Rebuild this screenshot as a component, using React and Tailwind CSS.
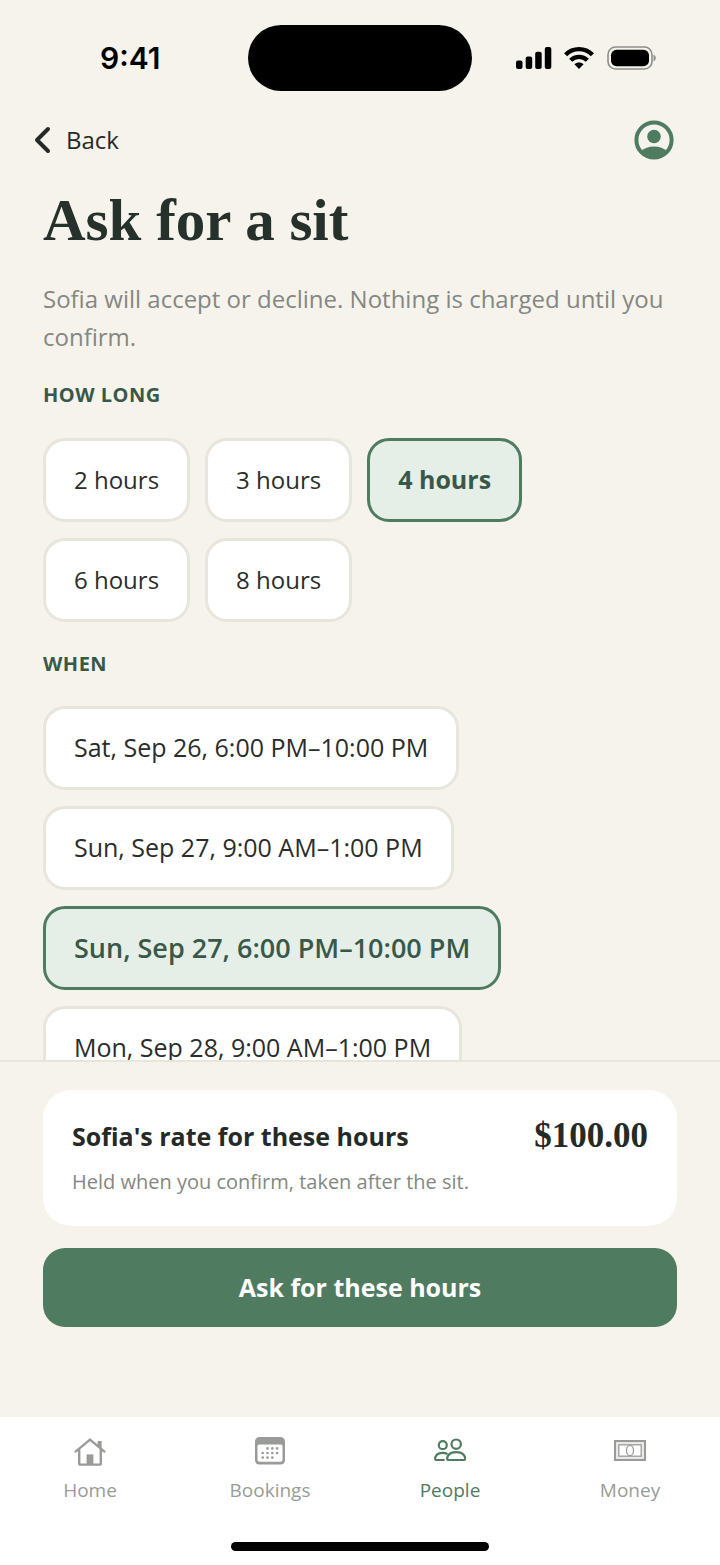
import React, { useState } from 'react';

const durations = ['2 hours', '3 hours', '4 hours', '6 hours', '8 hours'];

const slots = [
  'Sat, Sep 26, 6:00 PM–10:00 PM',
  'Sun, Sep 27, 9:00 AM–1:00 PM',
  'Sun, Sep 27, 6:00 PM–10:00 PM',
  'Mon, Sep 28, 9:00 AM–1:00 PM',
];

function HomeIcon() {
  return (
    <svg viewBox="0 0 32 32" className="w-8 h-8" fill="none" stroke="currentColor" strokeWidth="2.4" strokeLinecap="round" strokeLinejoin="round">
      <path d="M1.6 15.6 16 3.6l14.4 12" />
      <path d="M5.2 13.4v13.8a1.4 1.4 0 0 0 1.4 1.4h18.8a1.4 1.4 0 0 0 1.4-1.4V13.4" />
      <path d="M23.6 5h4v9l-4-3.4z" fill="currentColor" stroke="none" />
      <path d="M12.6 18.4h6.8v10h-6.8z" fill="currentColor" stroke="none" />
    </svg>
  );
}

function BookingsIcon() {
  return (
    <svg viewBox="0 0 32 32" className="w-8 h-8" fill="currentColor">
      <path fillRule="evenodd" d="M5.5 1h21A4.5 4.5 0 0 1 31 5.500v18.8a4.5 4.5 0 0 1-4.5 4.2h-21A4.5 4.5 0 0 1 1 24.3V5.500A4.5 4.5 0 0 1 5.5 1Zm-.7 7.6a1.6 1.6 0 0 0-1.3 1.6v13.6a2 2 0 0 0 2 2h21a2 2 0 0 0 2-2V10.2a1.6 1.6 0 0 0-1.3-1.6Z" />
      {[[13.5, 12.4], [18.3, 12.4], [23.1, 12.4], [8.7, 17], [13.5, 17], [18.3, 17], [23.1, 17], [8.7, 21.6], [13.5, 21.6], [18.3, 21.6]].map(([x, y]) => (
        <circle key={`${x}-${y}`} cx={x} cy={y} r="1.3" />
      ))}
    </svg>
  );
}

function PeopleIcon() {
  return (
    <svg viewBox="0 0 32 32" className="w-8 h-8" fill="none" stroke="currentColor" strokeWidth="2.2" strokeLinejoin="round" strokeLinecap="round">
      <circle cx="8.8" cy="9.2" r="4" />
      <circle cx="22.2" cy="8.2" r="4.7" />
      <path d="M9.8 24H2c-1.8 0-1.4-7.2 6.8-7.2 1.6 0 2.9.3 4 .9" />
      <path d="M14.2 24c-2.2 0-1.4-7.8 8-7.8s10.2 7.8 8 7.8Z" />
    </svg>
  );
}

function MoneyIcon() {
  return (
    <svg viewBox="0 0 32 32" className="w-8 h-8" fill="none" stroke="currentColor">
      <rect x="1" y="5" width="30" height="19" strokeWidth="2" />
      <rect x="4.8" y="8.8" width="22.4" height="11.4" strokeWidth="1.3" />
      <rect x="2.8" y="6.8" width="26.4" height="15.4" strokeWidth="2" opacity="0.25" />
      <ellipse cx="16" cy="14.5" rx="3.5" ry="5.2" strokeWidth="1.3" />
    </svg>
  );
}

const tabs = [
  { name: 'Home', Icon: HomeIcon },
  { name: 'Bookings', Icon: BookingsIcon },
  { name: 'People', Icon: PeopleIcon },
  { name: 'Money', Icon: MoneyIcon },
];

function StatusBar() {
  return (
    <div className="shrink-0 grid grid-cols-[1fr_224px_1fr] items-center pt-[25px]">
      <div className="pl-[100px] text-[30px] leading-8 font-semibold text-black font-['Inter',sans-serif]">9:41</div>
      <div className="h-[66px] rounded-full bg-black" />
      <div className="flex items-center justify-end gap-3 pr-16 text-black">
        <svg viewBox="0 0 36 24" className="w-9 h-6" fill="currentColor">
          <rect x="0" y="14.5" width="6.5" height="8.5" rx="2" />
          <rect x="9.7" y="10.5" width="6.5" height="12.5" rx="2" />
          <rect x="19.2" y="5.8" width="6.5" height="17.2" rx="2" />
          <rect x="28.8" y="1" width="6.5" height="22" rx="2" />
        </svg>
        <svg viewBox="0 0 30 24" className="w-[30px] h-6" fill="none" stroke="currentColor" strokeWidth="4.4">
          <path d="M1.6 8.7C9 1.2 21 1.2 28.4 8.7" />
          <path d="M6.7 14.2c4.6-4.5 12-4.5 16.6 0" />
          <path d="M15 23l-4.6-4.7c2.6-2.4 6.6-2.4 9.2 0Z" fill="currentColor" stroke="none" />
        </svg>
        <svg viewBox="0 0 50 24" className="w-[50px] h-6">
          <rect x="2" y="1" width="44" height="22" rx="7.5" fill="none" stroke="#8f8e8a" strokeWidth="1.6" />
          <rect x="5" y="3.8" width="38" height="16.4" rx="5.5" fill="currentColor" />
          <path d="M47.5 8.5c3 1.4 3 5.6 0 7z" fill="#8f8e8a" />
        </svg>
      </div>
    </div>
  );
}

function Chip({ label, selected, onClick, className }) {
  return (
    <button
      type="button"
      aria-pressed={selected}
      onClick={onClick}
      className={`h-[84px] shrink-0 px-7 rounded-[22px] border-3 whitespace-nowrap ${className} ${
        selected ? 'border-[#4f7b60] bg-[#e5efe7] text-[#38594a]' : 'border-[#e8e5dd] bg-white text-[#2a2d2b]'
      }`}
    >
      {label}
    </button>
  );
}

export default function App() {
  const [duration, setDuration] = useState('4 hours');
  const [slot, setSlot] = useState('Sun, Sep 27, 6:00 PM–10:00 PM');
  const [tab, setTab] = useState('People');

  return (
    <div className="h-screen flex flex-col bg-[#f6f3ec] text-[#262a27] font-['Open_Sans','Noto_Sans',sans-serif]">
      <StatusBar />

      <header className="shrink-0 flex items-center justify-between pt-[29px] pl-8 pr-[46px]">
        <button type="button" className="flex items-center gap-3 text-[24px] leading-10">
          <svg viewBox="0 0 22 28" className="w-[22px] h-7" fill="none" stroke="currentColor" strokeWidth="4" strokeLinecap="round" strokeLinejoin="round">
            <path d="M16 3 5 14l11 11" />
          </svg>
          Back
        </button>
        <button type="button" aria-label="Profile" className="text-[#4f7b60]">
          <svg viewBox="0 0 40 40" className="w-10 h-10">
            <circle cx="20" cy="20" r="17.6" fill="none" stroke="currentColor" strokeWidth="4" />
            <circle cx="20" cy="16.5" r="6.8" fill="currentColor" />
            <path d="M7 31.5c3-3.3 7.7-5 13-5s10 1.7 13 5a18 18 0 0 1-26 0Z" fill="currentColor" />
          </svg>
        </button>
      </header>

      <main className="flex-1 min-h-0 overflow-hidden px-[43px] pt-7">
        <h1 className="text-[59px] leading-16 font-bold text-[#26312b] font-['Liberation_Serif',serif]">Ask for a sit</h1>
        <p className="mt-7 text-[24px] leading-[38px] text-[#858782]">
          Sofia will accept or decline. Nothing is charged until you confirm.
        </p>

        <h2 className="mt-[25px] text-[20px] leading-7 font-bold tracking-wide text-[#38594a]">HOW LONG</h2>
        <div className="mt-[29px] flex flex-wrap gap-x-[15px] gap-y-4 pr-28">
          {durations.map((d) => (
            <Chip
              key={d}
              label={d}
              selected={d === duration}
              onClick={() => setDuration(d)}
              className={d === duration ? 'text-[25px] font-bold' : 'text-[24px]'}
            />
          ))}
        </div>

        <h2 className="mt-7 text-[20px] leading-7 font-bold tracking-wide text-[#38594a]">WHEN</h2>
        <div className="mt-7 flex flex-col items-start gap-4">
          {slots.map((s) => (
            <Chip
              key={s}
              label={s}
              selected={s === slot}
              onClick={() => setSlot(s)}
              className={s === slot ? 'text-[27px] font-semibold' : 'text-[25px]'}
            />
          ))}
        </div>
      </main>

      <section className="shrink-0 border-t-2 border-[#e8e5dd] px-[43px] pt-7 pb-[90px]">
        <div className="rounded-[28px] bg-white px-[29px] py-7">
          <div className="flex items-center justify-between leading-9">
            <span className="text-[25px] font-bold">Sofia's rate for these hours</span>
            <span className="text-[35px] font-bold font-['Liberation_Serif',serif]">$100.00</span>
          </div>
          <p className="mt-3 text-[20px] leading-8 text-[#858782]">Held when you confirm, taken after the sit.</p>
        </div>
        <button type="button" className="mt-[22px] w-full h-[79px] rounded-[22px] bg-[#4f7b60] text-[25px] font-bold text-white">
          Ask for these hours
        </button>
      </section>

      <nav className="shrink-0 bg-white pt-[19px] pb-[14px]">
        <div className="grid grid-cols-4">
          {tabs.map(({ name, Icon }) => (
            <a
              key={name}
              href={`#${name.toLowerCase()}`}
              onClick={() => setTab(name)}
              className={`flex flex-col items-center gap-1.5 text-[19px] leading-8 font-medium ${name === tab ? 'text-[#4f7b60]' : 'text-[#999b98]'}`}
            >
              <Icon />
              {name}
            </a>
          ))}
        </div>
        <div className="mx-auto mt-9 w-[258px] h-[9px] rounded-full bg-black" />
      </nav>
    </div>
  );
}
